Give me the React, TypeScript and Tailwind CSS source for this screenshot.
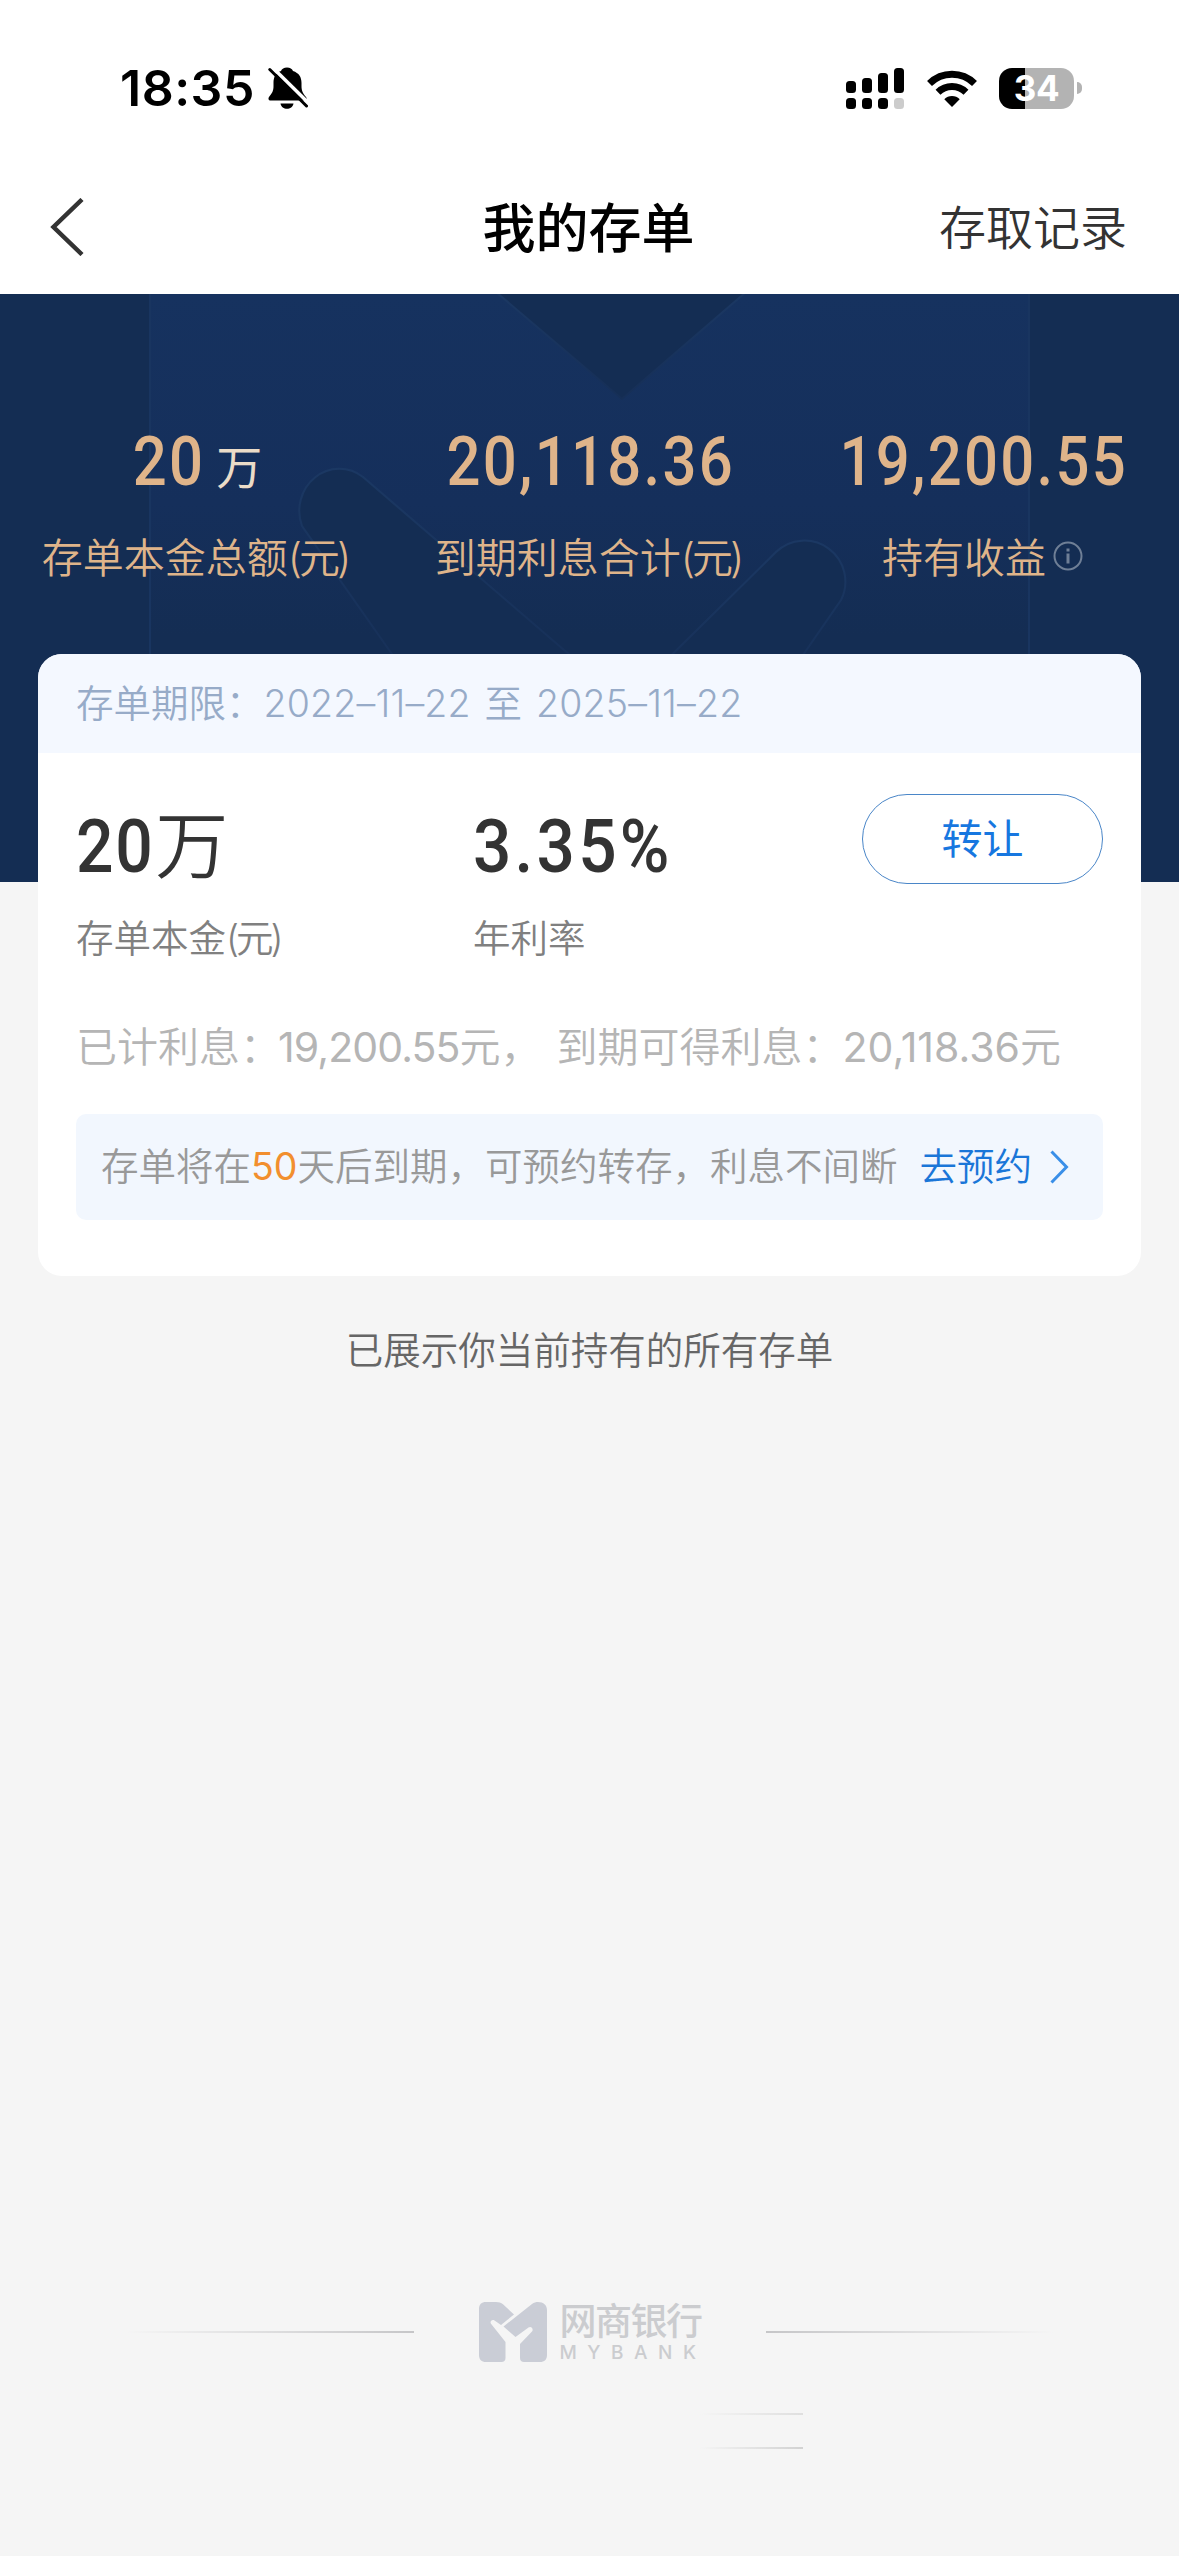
const summary = [
  { value: '20', unit: '万', label: '存单本金总额', yuan: true },
  { value: '20,118.36', label: '到期利息合计', yuan: true },
  { value: '19,200.55', label: '持有收益', info: true },
];

const signalBars = [
  { x: 0, y: 13, h: 12 },
  { x: 16, y: 10, h: 15 },
  { x: 32, y: 5, h: 20 },
  { x: 48, y: 0, h: 25 },
];

const StatusBar = () => (
  <div className="flex h-[176px] items-center justify-between pl-[120px] pr-[97px]">
    <div className="flex items-center gap-[13px]">
      <span className="text-[50px] leading-none font-semibold tracking-[0.5px]">18:35</span>
      <svg viewBox="0 0 40 43" className="h-[43px] w-10">
        <path
          d="M19 .5c3 0 5.200 1.500 6 3.500C31 6 33.500 10 33.500 16v3c0 5 1.500 7.500 4.500 11 1.400 2 .6 3.500-1.200 3.500H2.600C.8 33.500-.2 32 1 30c3.200-4 4.500-6 4.500-11v-3C5.500 10 7.500 6 13 4c.8-2 3-3.500 6-3.500zM12.500 36.500h13c-1 7-12 7-13 0z"
          fill="#000"
        />
        <path d="M4 0 41 36.500" stroke="#fff" strokeWidth="3.500" />
        <path d="M1.800 2.500 38.500 39" stroke="#000" strokeWidth="3" strokeLinecap="round" />
      </svg>
    </div>
    <div className="flex items-center">
      <svg viewBox="0 0 58 41" className="h-[41px] w-[58px]">
        {signalBars.map((bar, i) => (
          <g key={bar.x}>
            <rect x={bar.x} y={bar.y} width="10" height={bar.h} rx="3.500" />
            <rect x={bar.x} y="30" width="10" height="11" rx="3.500" fill={i === 3 ? '#ccc' : '#000'} />
          </g>
        ))}
      </svg>
      <svg viewBox="0 0 50 37" className="ml-[23px] h-[37px] w-[50px]">
        <g fill="none" stroke="#000" strokeWidth="7">
          <path d="M2.500 13.500a32 32 0 0 1 45 0" />
          <path d="M11 22.200a20 20 0 0 1 28 0" />
        </g>
        <path d="M25 37l-7.700-7.800a11 11 0 0 1 15.400 0z" />
      </svg>
      <div className="ml-[22px] flex h-[41px] w-[75px] items-center justify-center rounded-[13px] bg-[linear-gradient(90deg,#000_26px,#b3b3b3_26px)]">
        <span className="text-[35px] leading-none font-bold tracking-[-0.5px] text-white">34</span>
      </div>
      <div className="ml-[3px] h-3 w-[5px] rounded-r-full bg-[#b3b3b3]" />
    </div>
  </div>
);

const NavBar = () => (
  <div className="grid h-[118px] grid-cols-3 items-center pr-[52px] pl-[50px] pb-4">
    <svg viewBox="0 0 34 58" className="h-[58px] w-[34px]" fill="none" stroke="#333" strokeWidth="4.500">
      <path d="M32 1.500 3.500 29 32 56.500" />
    </svg>
    <h1 className="pt-[4px] text-center text-[53px] leading-none font-medium text-black">我的存单</h1>
    <span className="pt-[1px] text-right text-[47px] leading-none text-[#333]">存取记录</span>
  </div>
);

const YuanSuffix = () => (
  <span>
    <span className="mr-[-3px]">(</span>元<span className="ml-[-3px]">)</span>
  </span>
);

const HeroPattern = () => (
  <svg viewBox="0 0 1179 588" className="absolute inset-0 h-full w-full">
    <defs>
      <linearGradient id="panel" x1="0" y1="0" x2="0" y2="1">
        <stop offset="0" stopColor="#16325f" />
        <stop offset="0.550" stopColor="#152f5b" />
        <stop offset="0.900" stopColor="#142d53" />
      </linearGradient>
      <linearGradient id="edge" x1="0" y1="0" x2="0" y2="1">
        <stop offset="0" stopColor="#1b3863" />
        <stop offset="1" stopColor="#162f57" />
      </linearGradient>
    </defs>
    <rect x="149" y="0" width="881" height="380" fill="url(#panel)" />
    <g fill="#142d53" stroke="url(#edge)" strokeWidth="2">
      <path d="M496-2 622 105 746-2z" />
      <path d="M420 400 302 232A40 42 0 0 1 363 183L564 356 620 400z" />
      <path d="M632 400 776 258A41 41 0 0 1 841 306L776 400z" />
    </g>
    <path d="M150 0V360M1029 0V360" stroke="#193560" strokeWidth="2" />
  </svg>
);

const Hero = () => (
  <section className="relative h-[588px] bg-[#142d53]">
    <HeroPattern />
    <div className="relative grid grid-cols-3 pt-[132px] text-[#dfb48a]">
      {summary.map((item) => (
        <div key={item.label} className="flex flex-col items-center">
          <div className="flex h-[72px] items-center">
            <span className="origin-center scale-x-[0.88] pl-[4px] font-['Roboto'] text-[68px] leading-[72px] font-medium tracking-[2.6px]">
              {item.value}
            </span>
            {item.unit && (
              <span className="mt-[9px] mr-[7px] ml-[6px] text-[46px] leading-[72px] font-normal text-[#ebdcc8]">
                {item.unit}
              </span>
            )}
          </div>
          <div className="mt-[32px] flex items-center text-[41px] leading-[56px]">
            {item.label}
            {item.yuan && <YuanSuffix />}
            {item.info && (
              <svg
                viewBox="0 0 30 30"
                className="mb-1 ml-[7px] h-[30px] w-[30px]"
                fill="none"
                stroke="#6f7f96"
                strokeWidth="2"
              >
                <circle cx="15" cy="15" r="13.500" />
                <path d="M15 12.500V22.500M15 7.500V10.500" strokeWidth="3" />
              </svg>
            )}
          </div>
        </div>
      ))}
    </div>
  </section>
);

const DepositCard = () => (
  <section className="relative mx-[38px] -mt-[228px] h-[622px] overflow-hidden rounded-[24px] bg-white">
    <div className="flex h-[99px] items-center bg-[#f4f8ff] pl-[38px] text-[37.5px] leading-none text-[#97abc8]">
      <span>存单期限：</span>
      <span className="tracking-[0.2px] [word-spacing:3px]">2022–11–22 至 2025–11–22</span>
    </div>

    <div className="flex items-start px-[38px] pt-[40px]">
      <div className="w-[397px]">
        <div className="mt-[3px] flex items-center text-[#333]">
          <span className="origin-left scale-x-[0.88] font-['Roboto'] text-[75px] leading-[100px] font-medium tracking-[2px]">
            20
          </span>
          <span className="ml-[-10px] text-[73px] leading-[100px]">万</span>
        </div>
        <div className="mt-[15px] text-[37.5px] leading-[56px] text-[#808080]">
          存单本金
          <YuanSuffix />
        </div>
      </div>
      <div className="flex-1">
        <div className="mt-[3px] origin-left scale-x-[0.9] font-['Roboto'] text-[75px] leading-[100px] font-medium tracking-[3.6px] text-[#333]">
          3.35%
        </div>
        <div className="mt-[15px] text-[37.5px] leading-[56px] text-[#808080]">年利率</div>
      </div>
      <button className="mt-px h-[90px] w-[241px] rounded-full border-[1.5px] border-[#4a86c8] text-[41px] leading-none font-normal text-[#1777e0]">
        转让
      </button>
    </div>

    <div className="mt-[50px] flex pl-[38px] text-[41px] leading-[60px] whitespace-pre text-[#b5b5b5]">
      <span>已计利息：</span>
      <span className="ml-[-3px] font-normal tracking-[-0.9px]">19,200.55</span>
      <span>元，</span>
      <span className="ml-[15px]">到期可得利息：</span>
      <span className="ml-[-1px] font-normal">20,118.36</span>
      <span>元</span>
    </div>

    <div className="mx-[38px] mt-[37px] flex h-[106px] items-center rounded-[10px] bg-[#f2f7fe] pl-[25px] text-[37.5px] leading-none text-[#999]">
      <span>存单将在</span>
      <span className="font-normal text-[#f28f2e]">50</span>
      <span>天后到期，可预约转存，利息不间断</span>
      <a className="ml-[22px] flex items-center gap-[18px] text-[#1a76d8]">
        去预约
        <svg viewBox="0 0 19 34" className="h-[34px] w-[19px]" fill="none" stroke="#3a8fe8" strokeWidth="3">
          <path d="M1.500 1.500 16.500 17 1.500 32.500" />
        </svg>
      </a>
    </div>
  </section>
);

const Footer = () => (
  <footer className="mt-auto flex h-[255px] flex-col">
    <div className="flex items-center justify-center gap-[65px]">
      <div className="h-[2px] w-[288px] bg-gradient-to-r from-transparent to-[#c6c6c8]" />
      <div className="flex items-center gap-[13px]">
        <svg viewBox="0 0 68 60" className="h-[60px] w-[68px]" fill="#cacdd6">
          <path d="M7 0h10c3 0 5 .8 7 2.300L35 12.500 22 23 15.500 18.500c-2.500-1.500-5 1-3.500 3.200L26.500 40V56c0 2.500-1.500 4-4 4H7c-4.500 0-7-2.500-7-7V7c0-4.500 2.500-7 7-7z" />
          <path d="M53 2c2-1.400 4-2 6-2 5.500 0 9 3 9 8v45c0 4.500-2.500 7-7 7H45c-2.500 0-4-1.500-4-4V42L53 29.500c2-2.500-1-6-3.500-4L36.500 35 24.500 24.500z" />
        </svg>
        <div className="flex w-[141px] flex-col whitespace-nowrap text-[#cbcccf]">
          <span className="text-[37px] leading-[42px] font-medium tracking-[-1.500px]">网商银行</span>
          <span className="text-[19px] leading-[20px] font-medium tracking-[10.5px]">MYBANK</span>
        </div>
      </div>
      <div className="h-[2px] w-[288px] bg-gradient-to-l from-transparent to-[#c6c6c8]" />
    </div>
    <div className="mt-[50px] ml-[700px] flex w-[103px] flex-col gap-[32px]">
      <div className="h-[2px] bg-gradient-to-r from-transparent to-[#dfdfdf]" />
      <div className="h-[2px] bg-gradient-to-r from-transparent to-[#d2d2d2]" />
    </div>
  </footer>
);

export default function App() {
  return (
    <main className="flex h-[2556px] w-[1179px] flex-col overflow-hidden bg-[#f5f5f5] font-['Inter','Noto_Sans_CJK_SC',sans-serif] font-[350]">
      <header className="bg-white">
        <StatusBar />
        <NavBar />
      </header>
      <Hero />
      <DepositCard />
      <p className="mt-[45px] text-center text-[37.5px] leading-[60px] text-[#666]">已展示你当前持有的所有存单</p>
      <Footer />
    </main>
  );
}
